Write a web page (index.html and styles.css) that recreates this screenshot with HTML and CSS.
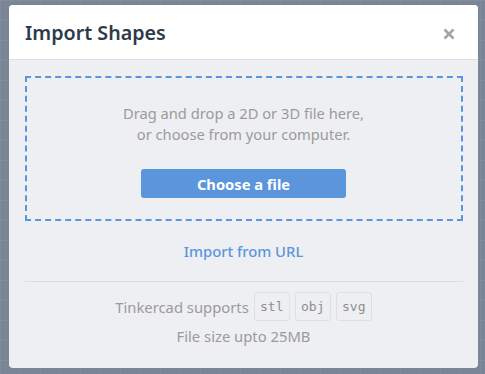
FILE: index.html
```html
<!DOCTYPE html>
<html>
<head>
<meta charset="utf-8">
<link rel="stylesheet" href="styles.css">
</head>
<body>
<div class="modal">
  <div class="modal-header">
    <h1 class="title">Import Shapes</h1>
    <span class="close">
      <svg width="12" height="12" viewBox="0 0 12 12"><path d="M1.5 1.5 L10.5 10.5 M10.5 1.5 L1.5 10.5" stroke="#a5a5a5" stroke-width="2.6" stroke-linecap="butt"/></svg>
    </span>
  </div>
  <div class="modal-body">
    <div class="dropzone">
      <p class="hint">Drag and drop a 2D or 3D file here,<br>or choose from your computer.</p>
      <button class="btn">Choose a file</button>
    </div>
    <a class="url-link">Import from URL</a>
    <div class="divider"></div>
    <div class="supports">
      <span>Tinkercad supports</span>
      <span class="tag">stl</span>
      <span class="tag">obj</span>
      <span class="tag">svg</span>
    </div>
    <div class="size">File size upto 25MB</div>
  </div>
</div>
</body>
</html>
```

FILE: styles.css
```css
html, body {
  margin: 0;
  padding: 0;
}
body {
  width: 485px;
  height: 374px;
  overflow: hidden;
  background-color: #7a8595;
  background-image:
    linear-gradient(to right, rgba(255,255,255,0.05) 1px, transparent 1px),
    linear-gradient(to bottom, rgba(255,255,255,0.05) 1px, transparent 1px);
  background-size: 20px 20px;
  font-family: "Noto Sans", "Open Sans", sans-serif;
}
.modal {
  margin: 5px 0 0 9px;
  width: 469px;
  height: 363px;
  border-radius: 4px;
  background: #eeeff2;
  overflow: hidden;
  display: flex;
  flex-direction: column;
}
.modal-header {
  height: 54px;
  background: #ffffff;
  border-bottom: 1px solid #dcdfe4;
  display: flex;
  align-items: center;
  justify-content: space-between;
  padding: 0 23px 0 16px;
}
.title {
  margin: 0;
  font-size: 19.7px;
  font-weight: 600;
  color: #2c3a4b;
}
.close {
  display: flex;
  margin-top: 3px;
}
.modal-body {
  padding: 16px 16px 0;
  display: flex;
  flex-direction: column;
  align-items: center;
}
.dropzone {
  box-sizing: border-box;
  width: 438px;
  height: 145px;
  border: 2px dashed #5b95dc;
  display: flex;
  flex-direction: column;
  align-items: center;
  padding-top: 25px;
}
.hint {
  margin: 0;
  text-align: center;
  font-size: 14.7px;
  line-height: 21px;
  color: #9b9b9b;
}
.btn {
  margin-top: 24px;
  width: 205px;
  height: 29px;
  border: none;
  border-radius: 3px;
  background: #5b95dc;
  color: #ffffff;
  font-family: "Noto Sans", "Open Sans", sans-serif;
  font-size: 14.7px;
  font-weight: 700;
}
.url-link {
  margin-top: 20px;
  font-size: 14.8px;
  line-height: 21px;
  font-weight: 500;
  color: #5b95dc;
}
.divider {
  margin-top: 19px;
  width: 438px;
  height: 1px;
  background: #d9dce1;
}
.supports {
  margin-top: 10px;
  display: flex;
  align-items: center;
  gap: 5px;
  font-size: 14.8px;
  color: #9b9b9b;
}
.tag {
  box-sizing: border-box;
  width: 36px;
  height: 29px;
  border: 1px solid #dcdfe3;
  border-radius: 3px;
  display: flex;
  align-items: center;
  justify-content: center;
  font-family: "DejaVu Sans Mono", monospace;
  font-size: 13px;
  color: #8e8e8e;
}
.size {
  margin-top: 5px;
  font-size: 14.8px;
  line-height: 21px;
  color: #9b9b9b;
}
```
